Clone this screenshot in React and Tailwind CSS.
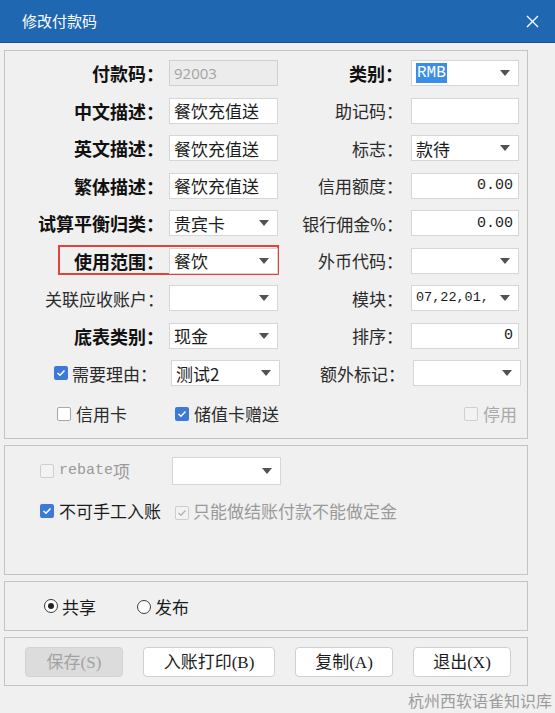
import React from 'react'

const CJK = { fontFamily: '"Microsoft YaHei", "Noto Sans CJK SC", "Noto Sans", sans-serif' }
const MONO = { fontFamily: '"Liberation Mono", "Noto Sans CJK SC", monospace' }
const SERIF = { fontFamily: '"Liberation Serif", serif' }

function Arrow() {
    return (
        <svg className="absolute right-[8px] top-1/2 -translate-y-1/2" width="10" height="6" viewBox="0 0 10 6">
            <polygon points="0,0 10,0 5,6" fill="#4d554d" />
        </svg>
    )
}

function Field({ children, w = 'w-[109px]', dropdown = false, right = false, disabled = false, mono = false, className = '' }) {
    return (
        <div
            className={`relative h-[26px] ${w} border flex items-center px-[4px] text-[17px] leading-none ${
                disabled ? 'bg-[#ececec] border-[#cfcfcf] text-[#a3a3a3]' : 'bg-white border-[#d6d6d6] text-[#1c1c1c]'
            } ${right ? 'justify-end pr-[5px]' : ''} ${className}`}
            style={mono ? MONO : undefined}
        >
            {children}
            {dropdown && <Arrow />}
        </div>
    )
}

function Check({ checked = false, disabled = false }) {
    if (checked) {
        return (
            <span className={`inline-flex w-[14px] h-[14px] rounded-[2px] items-center justify-center ${disabled ? 'bg-[#f3f3f3] border border-[#cdcdcd]' : 'bg-[#3d7ad8]'}`}>
                <svg width="10" height="8" viewBox="0 0 10 8">
                    <path d="M1.5 4 L4 6.3 L8.5 1.5" fill="none" stroke={disabled ? '#b5b5b5' : '#ffffff'} strokeWidth="1.5" />
                </svg>
            </span>
        )
    }
    return (
        <span className={`inline-block w-[14px] h-[14px] rounded-[2px] border ${disabled ? 'border-[#cfcfcf] bg-[#f3f3f3]' : 'border-[#a8a8a8] bg-white'}`} />
    )
}

function Radio({ checked = false }) {
    return (
        <span className="inline-flex w-[14px] h-[14px] rounded-full border border-[#3a3a3a] bg-white items-center justify-center">
            {checked && <span className="w-[6px] h-[6px] rounded-full bg-[#222]" />}
        </span>
    )
}

function Label({ children, bold = false, w }) {
    return (
        <div className={`${w} text-right leading-none whitespace-nowrap ${bold ? 'text-[18px] font-bold text-[#111]' : 'text-[17px] text-[#2a2a2a]'}`}>
            {children}
        </div>
    )
}

const rows = [
    { l: '付款码：', lb: true, lf: { text: '92003', disabled: true }, r: '类别：', rb: true, rf: { rmb: true, dropdown: true } },
    { l: '中文描述：', lb: true, lf: { text: '餐饮充值送' }, r: '助记码：', rf: {} },
    { l: '英文描述：', lb: true, lf: { text: '餐饮充值送' }, r: '标志：', rf: { text: '款待', dropdown: true } },
    { l: '繁体描述：', lb: true, lf: { text: '餐饮充值送' }, r: '信用额度：', rf: { text: '0.00', right: true, mono: true } },
    { l: '试算平衡归类：', lb: true, lf: { text: '贵宾卡', dropdown: true }, r: '银行佣金%：', rf: { text: '0.00', right: true, mono: true } },
    { l: '使用范围：', lb: true, lf: { text: '餐饮', dropdown: true }, r: '外币代码：', rf: { dropdown: true }, red: true },
    { l: '关联应收账户：', lf: { dropdown: true }, r: '模块：', rf: { text: '07,22,01,', dropdown: true, mono: true, small: true } },
    { l: '底表类别：', lb: true, lf: { text: '现金', dropdown: true }, r: '排序：', rf: { text: '0', right: true, mono: true } },
]

function App() {
    return (
        <div className="w-[555px] h-[713px] bg-[#f0f0f0] overflow-hidden" style={CJK}>
            {/* title bar */}
            <header className="h-[43px] bg-[#1f67b0] flex items-center justify-between pl-[22px] pr-[16px] border-b border-[#16508c]">
                <span className="text-white text-[15px]">修改付款码</span>
                <svg width="13" height="13" viewBox="0 0 13 13">
                    <path d="M1 1 L12 12 M12 1 L1 12" stroke="#ffffff" strokeWidth="1.4" />
                </svg>
            </header>

            <div className="pl-[4px] pt-[7px] flex flex-col">
                {/* main fields */}
                <div className="w-[524px] h-[389px] border border-[#c3c3c3] pt-[9px] flex flex-col gap-[11.5px]">
                    {rows.map((row) => (
                        <div key={row.l} className="relative flex items-center h-[26px]">
                            {row.red && (
                                <div className="absolute left-[53px] top-[-3px] w-[221px] h-[30px] border-2 border-[#e8403a] pointer-events-none" />
                            )}
                            <Label bold={row.lb} w="w-[159px]">{row.l}</Label>
                            <Field className="ml-[5px]" dropdown={row.lf.dropdown} disabled={row.lf.disabled}>
                                {row.lf.disabled ? (
                                    <span style={{ fontFamily: '"Open Sans", sans-serif' }} className="text-[15px]">{row.lf.text}</span>
                                ) : (
                                    row.lf.text
                                )}
                            </Field>
                            <Label bold={row.rb} w="w-[125px]">{row.r}</Label>
                            <Field w="w-[108px]" className="ml-[8px]" dropdown={row.rf.dropdown} right={row.rf.right} mono={row.rf.mono}>
                                {row.rf.rmb ? (
                                    <span className="bg-[#3a8ee6] text-white text-[16px] px-[1px] py-[2px]" style={MONO}>RMB</span>
                                ) : row.rf.mono ? (
                                    <span className={row.rf.small ? 'text-[13.5px]' : 'text-[15px]'}>{row.rf.text}</span>
                                ) : (
                                    row.rf.text
                                )}
                            </Field>
                        </div>
                    ))}

                    <div className="flex items-center h-[26px]">
                        <div className="w-[152px] flex items-center justify-end gap-[4px] text-[17px] leading-none text-[#2a2a2a]">
                            <Check checked />
                            <span>需要理由：</span>
                        </div>
                        <Field className="ml-[14px]" dropdown>测试2</Field>
                        <Label w="w-[125px]">额外标记：</Label>
                        <Field w="w-[108px]" className="ml-[8px]" dropdown />
                    </div>

                    <div className="flex items-center h-[18px] text-[17px] leading-none text-[#2a2a2a] mt-[7px]">
                        <div className="w-[170px] pl-[52px] flex items-center gap-[5px]">
                            <Check />
                            <span>信用卡</span>
                        </div>
                        <div className="w-[289px] flex items-center gap-[5px]">
                            <Check checked />
                            <span>储值卡赠送</span>
                        </div>
                        <div className="flex items-center gap-[5px] text-[#a9a9a9]">
                            <Check disabled />
                            <span>停用</span>
                        </div>
                    </div>
                </div>

                {/* rebate options */}
                <div className="w-[524px] h-[130px] mt-[6px] border border-[#c3c3c3] pl-[35px] pt-[11px] flex flex-col">
                    <div className="flex items-center h-[28px]">
                        <div className="w-[132px] flex items-center gap-[5px] text-[#9a9a9a]">
                            <Check disabled />
                            <span className="text-[15px]" style={MONO}>rebate</span>
                            <span className="text-[17px] -ml-[5px]">项</span>
                        </div>
                        <Field w="w-[109px]" className="h-[28px]" dropdown />
                    </div>
                    <div className="flex items-center mt-[16px] text-[17px] leading-none">
                        <Check checked />
                        <span className="ml-[5px] text-[#1c1c1c]">不可手工入账</span>
                        <span className="ml-[14px]"><Check checked disabled /></span>
                        <span className="ml-[4px] text-[#9a9a9a]">只能做结账付款不能做定金</span>
                    </div>
                </div>

                {/* share / publish */}
                <div className="w-[524px] h-[50px] mt-[6px] border border-[#c3c3c3] pl-[39px] flex items-center gap-[4px] text-[17px] leading-none text-[#1c1c1c]">
                    <Radio checked />
                    <span>共享</span>
                    <span className="ml-[37px]"><Radio /></span>
                    <span>发布</span>
                </div>

                {/* buttons */}
                <div className="w-[524px] h-[49px] mt-[6px] border border-[#c3c3c3] pl-[20px] flex items-center gap-[20px] text-[17px] leading-none">
                    <button className="w-[98px] h-[30px] rounded-[4px] bg-[#dcdcdc] border border-[#d3d3d3] text-[#a3a3a3]">
                        保存<span style={SERIF}>(S)</span>
                    </button>
                    <button className="w-[132px] h-[30px] rounded-[4px] bg-white border border-[#d0d0d0] text-[#1c1c1c]">
                        入账打印<span style={SERIF}>(B)</span>
                    </button>
                    <button className="w-[98px] h-[30px] rounded-[4px] bg-white border border-[#d0d0d0] text-[#1c1c1c]">
                        复制<span style={SERIF}>(A)</span>
                    </button>
                    <button className="w-[98px] h-[30px] rounded-[4px] bg-white border border-[#d0d0d0] text-[#1c1c1c]">
                        退出<span style={SERIF}>(X)</span>
                    </button>
                </div>

                <div className="w-[548px] mt-[5px] text-right text-[16px] leading-[18px] text-[#9c9c9c]">杭州西软语雀知识库</div>
            </div>
        </div>
    )
}

export default App
